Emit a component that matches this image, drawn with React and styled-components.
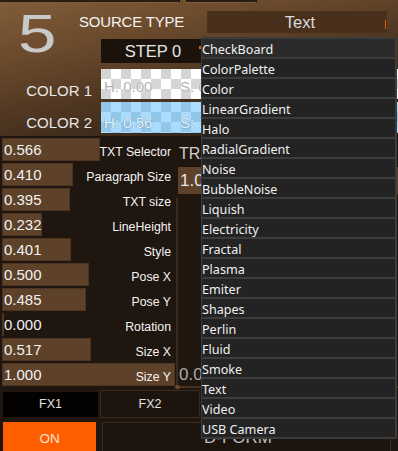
import React from 'react';
import styled, { createGlobalStyle } from 'styled-components';

const Global = createGlobalStyle`
  html, body { margin: 0; padding: 0; background: #1f1610; }
  #root { width: 398px; height: 451px; }
  * { box-sizing: border-box; }
`;

const Screen = styled.div`
  position: relative;
  width: 398px;
  height: 451px;
  overflow: hidden;
  background: #1f1610;
  font-family: "Liberation Sans", Arial, sans-serif;
  color: #eee;
`;

const Top = styled.div`
  display: grid;
  grid-template-columns: 79px 22px 106px 1fr;
  grid-template-rows: 3px 33px 30px 34px 34px;
  height: 136px;
  background: linear-gradient(168deg, #815d39 0%, #6a4a2c 28%, #4e3621 55%, #33241a 82%, #2a1d14 100%);
`;

const Stubs = styled.div`
  grid-column: 1 / -1;
  grid-row: 1;
  display: flex;
  gap: 6px;
`;

const Stub = styled.div`
  width: ${p => p.$w}px;
  height: 3px;
  background: #2a1c11;
  border-bottom: 1px solid #7a5c3e;
  border-right: 1px solid #1a110a;
`;

const BigNumber = styled.div`
  grid-column: 1;
  grid-row: 2 / 4;
  font-size: 54px;
  line-height: 54px;
  padding-top: 3px;
  padding-left: 18px;
  color: #c9c9c9;
  transform-origin: 18px 0;
  transform: scaleX(1.28);
`;

const SourceLabel = styled.div`
  grid-column: 2 / 4;
  grid-row: 2;
  align-self: start;
  margin-top: 11px;
  font-size: 15px;
  line-height: 15px;
  letter-spacing: -0.2px;
  color: #f4f4f4;
  white-space: nowrap;
`;

const SelectBox = styled.div`
  grid-column: 4;
  grid-row: 2;
  position: relative;
  margin: 8px 11px 3px 0;
  background: #48301d;
  color: #dcdcdc;
  font-size: 16.5px;
  display: flex;
  align-items: center;
  justify-content: center;
  padding-left: 6px;
  &::after {
    content: "";
    position: absolute;
    right: 1px;
    top: 9px;
    width: 1px;
    height: 9px;
    background: #e0600c;
  }
`;

const StepBox = styled.div`
  grid-column: 3;
  grid-row: 3;
  position: relative;
  margin: 3px 2px 3px 0;
  background: #1b120b;
  color: #e4e4e4;
  font-size: 16.5px;
  display: flex;
  align-items: center;
  justify-content: center;
  &::after {
    content: "";
    position: absolute;
    right: 4px;
    top: 7px;
    width: 2px;
    height: 3px;
    background: #e0600c;
  }
`;

const ColorLabel = styled.div`
  grid-column: 1 / 3;
  grid-row: ${p => p.$row};
  align-self: end;
  text-align: right;
  padding-right: 9px;
  padding-bottom: ${p => p.$pb}px;
  font-size: 15px;
  line-height: 15px;
  color: #e8e8e8;
`;

const Swatch = styled.div`
  grid-column: 3 / 5;
  grid-row: ${p => p.$row};
  margin-top: ${p => p.$mt}px;
  height: ${p => p.$h}px;
  display: grid;
  grid-template-columns: 76px 1fr;
  align-items: end;
  padding-left: 3px;
  padding-bottom: ${p => p.$pb}px;
  background-color: ${p => p.$base};
  background-image:
    linear-gradient(45deg, ${p => p.$alt} 25%, transparent 25%, transparent 75%, ${p => p.$alt} 75%),
    linear-gradient(45deg, ${p => p.$alt} 25%, transparent 25%, transparent 75%, ${p => p.$alt} 75%);
  background-size: 20px 20px;
  background-position: 10px 0, 0 10px;
  font-size: 15px;
  line-height: 15px;
  color: ${p => p.$text};
  text-shadow: 0 0 1px ${p => p.$glow}, 0 0 1px ${p => p.$glow};
  white-space: nowrap;
  overflow: hidden;
`;

const Middle = styled.div`
  display: flex;
  height: 252px;
  padding-top: 2px;
`;

const Sliders = styled.div`
  display: flex;
  flex-direction: column;
  gap: 2px;
  width: 173px;
  margin-left: 2px;
`;

const SliderRow = styled.div`
  position: relative;
  height: 23px;
  display: flex;
  justify-content: space-between;
`;

const Fill = styled.div`
  position: absolute;
  left: 0;
  top: 0;
  bottom: 0;
  min-width: 2px;
  background: #5d4129;
  border: 1px solid #4c3421;
`;

const Value = styled.span`
  position: relative;
  padding-left: 2px;
  font-size: 15px;
  line-height: 23px;
  color: #f2f2f2;
`;

const Label = styled.span`
  position: relative;
  padding-right: 4px;
  padding-top: 5px;
  font-size: 12.3px;
  line-height: 18px;
  color: #f4f4f4;
  white-space: nowrap;
`;

const Side = styled.div`
  flex: 1;
  display: flex;
  flex-direction: column;
`;

const SideTitle = styled.div`
  height: 29px;
  padding-left: 4px;
  padding-top: 8px;
  font-size: 16px;
  line-height: 16px;
  color: #cfcfcf;
  white-space: nowrap;
`;

const SideValue = styled.div`
  margin-left: 3px;
  height: 27px;
  background: #5d4129;
  color: #e6e6e6;
  font-size: 17px;
  line-height: 27px;
  padding-left: 2px;
`;

const Pad = styled.div`
  position: relative;
  flex: 1;
  margin-top: 4px;
  margin-left: 1px;
  border-left: 2px solid #3e2a1a;
  border-bottom: 2px solid #4a321f;
  display: flex;
  align-items: flex-end;
  padding-left: 1px;
  padding-bottom: 3px;
  font-size: 17px;
  line-height: 17px;
  color: #a9a9a9;
  &::after {
    content: "";
    position: absolute;
    left: -3px;
    bottom: -3px;
    width: 5px;
    height: 4px;
    border-radius: 2px;
    background: #6a4a2c;
  }
`;

const Bottom = styled.div`
  display: flex;
  flex-direction: column;
  gap: 4px;
  padding-top: 2px;
`;

const ButtonRow = styled.div`
  display: flex;
  align-items: center;
  height: ${p => p.$h}px;
`;

const FxButton = styled.div`
  width: ${p => p.$w}px;
  height: ${p => p.$h}px;
  margin-left: ${p => p.$ml}px;
  background: ${p => (p.$active ? '#030201' : '#1d140e')};
  border: ${p => (p.$active ? 'none' : '1px solid #3a2b20')};
  color: #e0e0e0;
  font-size: 12.5px;
  display: flex;
  align-items: center;
  justify-content: center;
`;

const OnButton = styled.div`
  width: 93px;
  height: 32px;
  margin-left: 3px;
  background: #ff5e00;
  color: #ffe2cf;
  font-size: 13.5px;
  display: flex;
  align-items: center;
  justify-content: center;
`;

const ModeBox = styled.div`
  width: 289px;
  height: 32px;
  margin-left: 6px;
  border: 1px solid #3a2b20;
  background: #1d140e;
  padding-left: 101px;
  padding-top: 6px;
  font-size: 17px;
  line-height: 17px;
  color: #bdbdbd;
`;

const Menu = styled.div`
  position: absolute;
  left: 201px;
  top: 37px;
  width: 196px;
  display: flex;
  flex-direction: column;
  border-bottom: 2px solid #3b3b3b;
  font-family: "Noto Sans", "DejaVu Sans", sans-serif;
`;

const MenuItem = styled.div`
  height: 20px;
  border-top: 2px solid #3c3c3c;
  border-left: 1px solid #3c3c3c;
  border-right: 2px solid #3c3c3c;
  background: ${p => (p.$hot ? '#2b2b2b' : '#232323')};
  color: #f0f0f0;
  font-size: 12.6px;
  line-height: 22px;
  white-space: nowrap;
`;

const sliders = [
  ['0.566', 'TXT Selector'],
  ['0.410', 'Paragraph Size'],
  ['0.395', 'TXT size'],
  ['0.232', 'LineHeight'],
  ['0.401', 'Style'],
  ['0.500', 'Pose X'],
  ['0.485', 'Pose Y'],
  ['0.000', 'Rotation'],
  ['0.517', 'Size X'],
  ['1.000', 'Size Y'],
];

const items = [
  'CheckBoard', 'ColorPalette', 'Color', 'LinearGradient', 'Halo',
  'RadialGradient', 'Noise', 'BubbleNoise', 'Liquish', 'Electricity',
  'Fractal', 'Plasma', 'Emiter', 'Shapes', 'Perlin', 'Fluid', 'Smoke',
  'Text', 'Video', 'USB Camera',
];

export default function App() {
  return (
    <>
      <Global />
      <Screen>
        <Top>
          <Stubs>
            <Stub $w={180} />
            <Stub $w={71} />
          </Stubs>
          <BigNumber>5</BigNumber>
          <SourceLabel>SOURCE TYPE</SourceLabel>
          <SelectBox>Text</SelectBox>
          <StepBox>STEP 0</StepBox>
          <ColorLabel $row={4} $pb={2}>COLOR 1</ColorLabel>
          <Swatch $row={4} $mt={3} $h={30} $pb={5} $base="#ffffff" $alt="#d5d5d5" $text="#b4b4b4" $glow="#ffffff">
            <span>H: 0.00</span>
            <span>S: 0.00</span>
          </Swatch>
          <ColorLabel $row={5} $pb={4}>COLOR 2</ColorLabel>
          <Swatch $row={5} $mt={2} $h={31} $pb={3} $base="#abdcfd" $alt="#92c7ea" $text="#e4f3fc" $glow="#6d95ad">
            <span>H: 0.56</span>
            <span>S: 1.00</span>
          </Swatch>
        </Top>
        <Middle>
          <Sliders>
            {sliders.map(([v, l]) => (
              <SliderRow key={l}>
                <Fill style={{ width: `${parseFloat(v) * 100}%` }} />
                <Value>{v}</Value>
                <Label>{l}</Label>
              </SliderRow>
            ))}
          </Sliders>
          <Side>
            <SideTitle>TRANSFORM</SideTitle>
            <SideValue>1.00</SideValue>
            <Pad>0.00</Pad>
          </Side>
        </Middle>
        <Bottom>
          <ButtonRow $h={28}>
            <FxButton $w={95} $h={25} $ml={3} $active>FX1</FxButton>
            <FxButton $w={100} $h={28} $ml={2}>FX2</FxButton>
          </ButtonRow>
          <ButtonRow $h={32}>
            <OnButton>ON</OnButton>
            <ModeBox>D-FORM</ModeBox>
          </ButtonRow>
        </Bottom>
        <Menu>
          {items.map((it, i) => (
            <MenuItem key={it} $hot={i === 0}>{it}</MenuItem>
          ))}
        </Menu>
      </Screen>
    </>
  );
}
